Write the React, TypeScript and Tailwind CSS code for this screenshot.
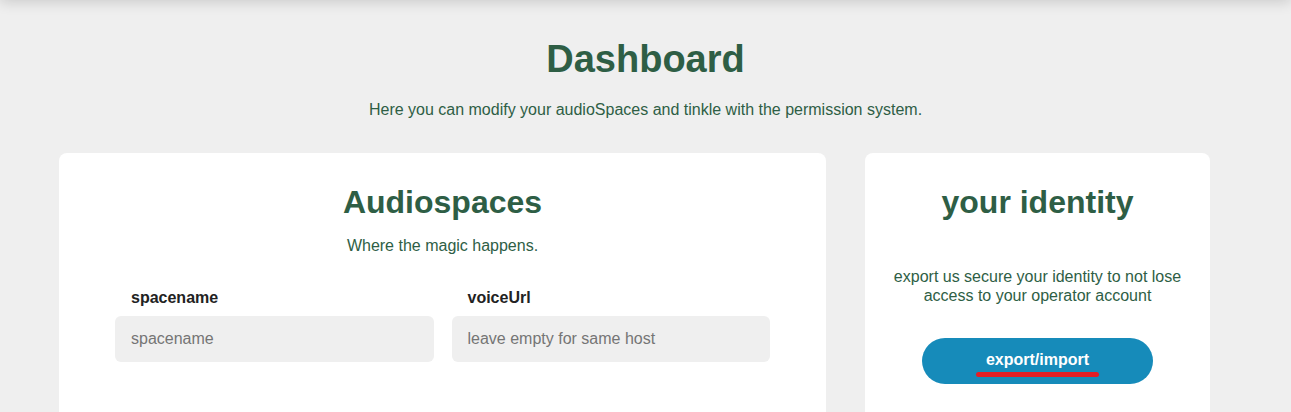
import React from "react";

const font = { fontFamily: '"Liberation Sans", Arial, sans-serif' };

function Field({ label, placeholder }: { label: string; placeholder: string }) {
  return (
    <div className="flex flex-col">
      <label className="pl-4 text-[16px] leading-[18px] font-bold text-[#222]">{label}</label>
      <input
        placeholder={placeholder}
        className="mt-[9.5px] h-[46px] w-full rounded-md bg-[#efefef] px-4 text-[16px] text-[#333] placeholder:text-[#757575] outline-none"
      />
    </div>
  );
}

export default function App() {
  return (
    <div style={font} className="relative min-h-[412px] overflow-hidden bg-[#efefef]">
      {/* header sits just above the viewport, only its shadow shows */}
      <div className="absolute -top-[40px] left-0 right-0 h-[40px] bg-[#efefef] shadow-[0_2px_14px_rgba(0,0,0,0.16)]" />

      <div className="pt-[37px] text-center">
        <h1 className="text-[38px] leading-[45.6px] font-bold text-[#2e5e45]">Dashboard</h1>
        <p className="mt-[17.5px] text-[16px] leading-[20px] text-[#2e5e45]">
          Here you can modify your audioSpaces and tinkle with the permission system.
        </p>
      </div>

      <div className="mt-[33px] ml-[59px] flex items-start gap-[39px]">
        <div className="h-[300px] w-[767px] rounded-lg bg-white px-[56px] pt-[30px]">
          <h2 className="text-center text-[32px] leading-[38px] font-bold text-[#2e5e45]">Audiospaces</h2>
          <p className="mt-[15px] text-center text-[16px] leading-[20px] text-[#2e5e45]">Where the magic happens.</p>
          <div className="mt-[32.5px] grid grid-cols-2 gap-[18px]">
            <Field label="spacename" placeholder="spacename" />
            <Field label="voiceUrl" placeholder="leave empty for same host" />
          </div>
        </div>

        <div className="h-[300px] w-[345px] rounded-lg bg-white px-6 pt-[30px] text-center">
          <h2 className="text-[32px] leading-[38px] font-bold text-[#2e5e45]">your identity</h2>
          <p className="mt-[45.5px] text-[16px] leading-[19.2px] text-[#2e5e45]">
            export us secure your identity to not lose access to your operator account
          </p>
          <button className="mx-auto mt-[33px] flex h-[46px] w-[231px] items-center justify-center rounded-full bg-[#168bba] text-[16px] font-bold text-white">
            <span className="relative -mt-[3px]">
              export/import
              <span className="absolute -left-[10px] -right-[10px] top-[24px] h-[5px] rounded-full bg-[#e41e25]" />
            </span>
          </button>
        </div>
      </div>
    </div>
  );
}
